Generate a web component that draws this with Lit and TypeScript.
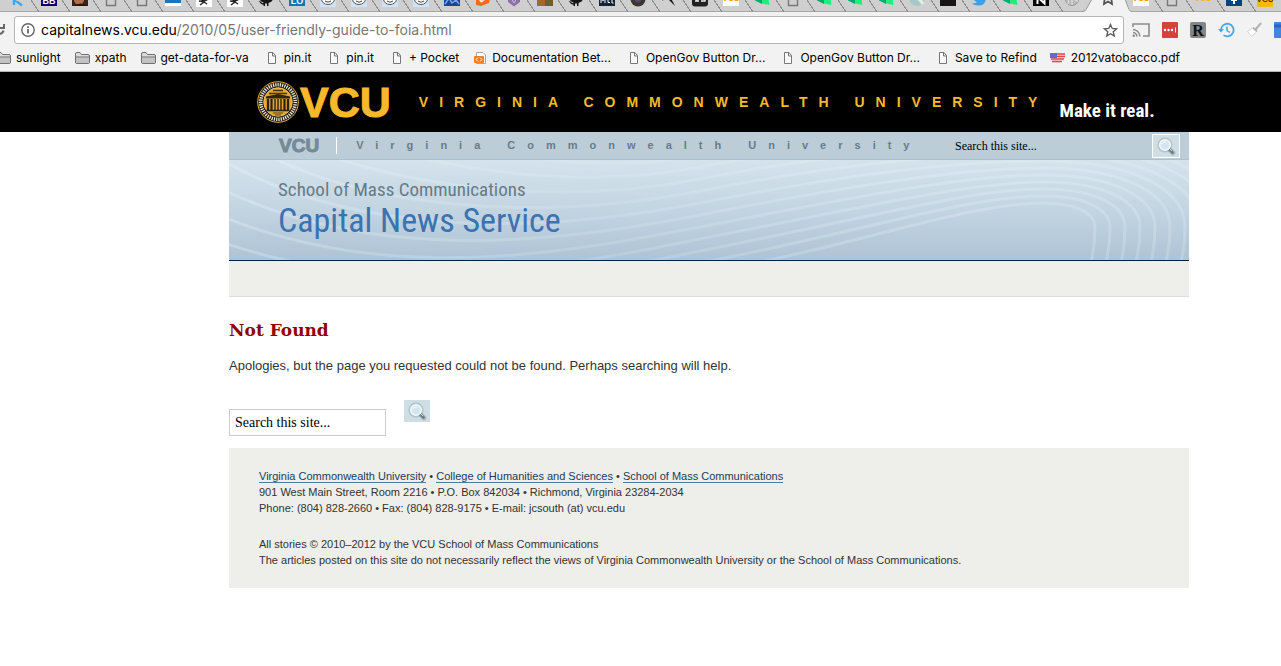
import { LitElement, html, svg, css } from "lit";
import { customElement } from "lit/decorators.js";

type Kind = string;

const page = svg`<path d="M3.5 0V13.500H12.500V0" fill="none" stroke="#777" stroke-width="1.400"/>`;
const reddit = svg`<rect y="0" width="16" height="15" fill="#cfe3f8"/><ellipse cx="8" cy="7" rx="6.500" ry="5.500" fill="#fff" stroke="#555"/><circle cx="5.500" cy="6" r="1.200" fill="#999"/><circle cx="10.500" cy="6" r="1.200" fill="#999"/><path d="M5 9Q8 11.500 11 9" fill="none" stroke="#444"/>`;
const medium = svg`<path d="M1 4L8 7.500V12L1 8.500Z" fill="#00ab6b"/><path d="M8 8L14 4.500L15.500 13L8 11.500Z" fill="#1cf07b"/>`;
const octocat = svg`<path d="M2 3H14Q16 7 13.500 9.500L10.500 11V14H9V11.500H7V14H5.500V12.500Q3 13 2 10.500L0.500 9Q3 9 4 11L5.500 11V10.500Q0 9 2 3Z" fill="#171515"/><path d="M4 3H12V6Q8 8 4 6Z" fill="#cfcfcf"/>`;
const bird = svg`<rect width="16" height="15" fill="#fff"/><path d="M2 6Q5 6 7 9L14 4M7 9Q10 9 12 7M4 13L8 10L11 12M3 9L7 9.500" fill="none" stroke="#222" stroke-width="1.400"/>`;
const block = (bg: string, fg: string, t: string) =>
  svg`<rect width="16" height="14" fill="${bg}"/><text x="8" y="12" text-anchor="middle" font-size="9" font-weight="700" fill="${fg}">${t}</text>`;

const favicons: Record<Kind, unknown> = {
  page, reddit, medium, octocat, bird,
  k: svg`<path d="M4 4V13M11 4L5 8L12 13.500" fill="none" stroke="#43a5ee" stroke-width="2.400"/>`,
  bb: block("#00006e", "#fff", "BB"),
  face: svg`<rect width="16" height="14" fill="#3a211a"/><ellipse cx="7" cy="8" rx="5" ry="4.500" fill="#b56d50"/><path d="M2 14Q8 9 16 14Z" fill="#2a1712"/>`,
  sea: svg`<rect width="16" height="11" fill="#1a75ba"/><rect y="11" width="16" height="3" fill="#fff"/>`,
  lo: block("#0b79b5", "#fff", "LO"),
  nc: svg`<rect width="16" height="14" fill="#14489a"/><path d="M1 12L5 6L8 11L12 8L15 12" fill="none" stroke="#7fa9e0" stroke-width="1.500"/>`,
  strip: svg`<path d="M1 5L15 7 14 11 6 14 1 13Z" fill="#f26b1d"/><path d="M4 8L10 8.500L6 10.500Z" fill="#fff"/>`,
  gem: svg`<path d="M2 4H14V10L8 14.500L2 10Z" fill="#8d70a8"/><path d="M5 6L8 11L11 6" fill="none" stroke="#cdbdd9"/>`,
  camo: svg`<rect width="8" height="14" fill="#a4662b"/><rect x="8" width="8" height="14" fill="#68622a"/>`,
  navy: svg`<rect width="16" height="14" fill="#15233a"/><path d="M2 11V7H4V9V7H6V11M9 7V10.500H11M8 7H10.500M13 7V11H14.500" fill="none" stroke="#fff"/>`,
  lens: svg`<circle cx="8" cy="7" r="7.500" fill="#39382f"/><circle cx="8" cy="7" r="3.500" fill="#57456e"/>`,
  x: svg`<path d="M4 4L14 14L12 10L9 5Z" fill="#161616"/><path d="M1 8Q4 7 5 4" fill="none" stroke="#566ee0" stroke-width="1.600"/>`,
  dark: svg`<rect width="16" height="14.500" rx="3" fill="#222"/><path d="M3 6H7M3 9H7M5 5V9M9 6H13V9H9" fill="none" stroke="#eee" stroke-width="1.500"/>`,
  vcu: svg`<rect width="16" height="14" fill="#fff"/><text x="8" y="9" text-anchor="middle" font-size="8" font-weight="700" fill="#f59a00">VCU</text>`,
  pastel: svg`<circle cx="8" cy="6" r="8" fill="#a8c9c9"/><path d="M3 4Q10 5 14 12" fill="none" stroke="#e4eee2" stroke-width="3"/>`,
  black: svg`<rect width="16" height="14" fill="#161415"/>`,
  tweet: svg`<path d="M1 11Q4 12 6 10Q2 9 2 4L8 7Q8 3 12 4L15 5Q15 14 7 13.500Q3 13.500 1 11Z" fill="#3d9fe6"/>`,
  n: svg`<rect width="16" height="14" fill="#000"/><path d="M4.500 12V5L11.500 11.500V4" fill="none" stroke="#fff" stroke-width="2"/>`,
  globe: svg`<circle cx="8" cy="7" r="6.500" fill="#b9b9b9" stroke="#999"/><path d="M2 5Q6 9 4 12M8 1V13M12 4Q9 9 14 9" fill="none" stroke="#e8e8e8"/>`,
  star: svg`<path d="M5 4L4 12L8 9.500L12 12L11 4" fill="none" stroke="#555" stroke-width="1.800"/><path d="M0 5L4 7" stroke="#d5d57b" stroke-width="1.500"/>`,
  gold: svg`<text x="8" y="9" text-anchor="middle" font-size="8" font-weight="700" fill="#f3b32a">VCU</text>`,
  plus: svg`<rect width="16" height="14" fill="#00427f"/><path d="M8 5V12M5 8H11" stroke="#fff" stroke-width="2"/>`,
  goldbox: svg`<rect width="16" height="15" fill="#fcba00"/><text x="8" y="10" text-anchor="middle" font-size="8" font-weight="700" fill="#443a10">VCU</text>`,
};

const leftTabs = "k bb face page page sea bird bird octocat lo reddit reddit reddit reddit nc strip gem camo octocat navy lens x dark vcu medium page medium medium medium pastel black tweet medium n globe".split(" ");
const rightTabs = "vcu page gold plus goldbox".split(" ");

const folder = html`<svg width="17" height="14" viewBox="0 0 17 14" aria-hidden="true"><path d="M1.500 11V3Q1.500 1.500 3 1.500H6L7.500 3.500H14Q15.500 3.500 15.500 5V11Q15.500 12.500 14 12.500H3Q1.500 12.500 1.500 11Z" fill="#dcdcdc" stroke="#6f6f6f"/><path d="M2 6.500H15V12H2Z" fill="#c3c3c3"/><path d="M2 6H15" stroke="#6f6f6f"/></svg>`;
const sheet = html`<svg width="10" height="14" viewBox="0 0 10 14" aria-hidden="true"><path d="M1.500 1.500H6L8.500 4.500V12.500H1.500ZM5.500 1.500V5H8.500" fill="#fafafa" stroke="#777"/></svg>`;
const codeIcon = html`<svg width="13" height="14" viewBox="0 0 13 14" aria-hidden="true"><path d="M2.500 1.500H9L11.500 4V12.500H2.500Z" fill="#fff" stroke="#a5a5a5"/><rect x="0" y="5" width="10" height="7" rx="1" fill="#f47c20"/><path d="M4 6.500L2 8.500L4 10.500M6 6.500L8 8.500L6 10.500" fill="none" stroke="#fff"/></svg>`;
const flag = html`<svg width="17" height="14" viewBox="0 0 17 14" aria-hidden="true"><path d="M0 2H14L16 3L15 7L13 11H10L8 13L5 11H2L0 8Z" fill="#f4e6e6"/><path d="M7 3H15M7 5.500H15M1 8H14M2 10.500H12" stroke="#e0464c" stroke-width="1.300"/><path d="M0 2H7V7H0Z" fill="#6c66d8"/></svg>`;

const bookmarks: [unknown, string, string][] = [
  [folder, "sunlight", "first"], [folder, "xpath", ""], [folder, "get-data-for-va", ""],
  [sheet, "pin.it", "doc"], [sheet, "pin.it", "doc"], [sheet, "+ Pocket", "doc"],
  [codeIcon, "Documentation Bet...", "code"], [sheet, "OpenGov Button Dr...", "doc"],
  [sheet, "OpenGov Button Dr...", "doc"], [sheet, "Save to Refind", "doc"],
  [flag, "2012vatobacco.pdf", ""],
];

const magnifier = html`<svg width="22" height="20" viewBox="0 0 22 20" aria-hidden="true">
  <circle cx="10" cy="9" r="7.500" fill="#8797a1" opacity=".4"/>
  <path d="M13 12L18 17" stroke="#9fadb6" stroke-width="5" stroke-linecap="round" opacity=".6"/>
  <path d="M13 12L17.500 16.500" stroke="#6e7f89" stroke-width="3" stroke-linecap="round"/>
  <path d="M14 12L17 15" stroke="#c9d5dc" stroke-width="1"/>
  <circle cx="10" cy="9" r="5.300" fill="#d3e5f0" stroke="#f3f8fb" stroke-width="1.600"/>
  <path d="M7 8Q8 5.500 11 6" fill="none" stroke="#fff"/></svg>`;

// Each ribbon sweeps in from the left, dips, rises to a crest and turns down at the right.
const wave = (j: number) => {
  const k = 7 - j;
  const top = 7 * j - 6;
  const mid = 31 + 12 * j;
  const right = 866 + 15 * k;
  return `M${20 - 45 * j} ${-15 + 4 * j}C${130 - 15 * j} ${50 + 30 * j} ${310} ${mid + 31} 471 ${mid}C640 ${mid - 33} 740 ${top} 815 ${top}C${815 + (right - 815) * 0.6} ${top} ${right} ${67 - (67 - top) * 0.6} ${right} 67C${right} 80 ${right - 1} 90 ${right - 4} 102`;
};

const waves = html`<svg class="waves" viewBox="0 0 960 100" preserveAspectRatio="none" aria-hidden="true">
  <defs><linearGradient id="fade" gradientUnits="userSpaceOnUse" x1="0" y1="0" x2="960" y2="0"><stop offset="0" stop-color="#eaf6fa" stop-opacity=".3"/><stop offset=".4" stop-color="#e4f2f4" stop-opacity=".18"/><stop offset=".65" stop-color="#eaf6fa" stop-opacity=".25"/><stop offset="1" stop-color="#eaf6fa" stop-opacity=".22"/></linearGradient></defs>
  ${[-3, -2, -1, 0, 1, 2, 3, 4, 5, 6, 7].map((j) => svg`<path d="${wave(j)}" fill="none" stroke="url(#fade)" stroke-width="3"/>`)}
</svg>`;

const seal = html`<svg width="42" height="42" viewBox="0 0 42 42" role="img" aria-label="University seal">
  <circle cx="21" cy="21" r="20.300" fill="#16130d" stroke="#e9b23c"/>
  <circle cx="21" cy="21" r="17.300" fill="none" stroke="#e8e2d4" stroke-width="3.600" stroke-dasharray="1.300 1"/>
  <circle cx="21" cy="21" r="14.300" fill="#e2a52f" stroke="#f5ce73" stroke-width=".8"/>
  <path d="M16 9.500H26M12 12.500H30" stroke="#453211" stroke-width="1.400"/>
  <path d="M9 15.500L21 13L33 15.500V17.500H9Z" fill="#30230f"/>
  <path d="M11 18V29M14.500 18V29M27.500 18V29M31 18V29" stroke="#2b2110" stroke-width="2.200"/>
  <path d="M18 18V29M21 18V29M24 18V29" stroke="#30230f" stroke-width="1.400"/>
  <path d="M9.500 29.500H32.500" stroke="#2b2110" stroke-width="1.500"/>
  <path d="M16 32H26M18 34H24" stroke="#5b4317" stroke-width="1.200"/>
</svg>`;

@customElement("app-root")
export class AppRoot extends LitElement {
  static styles = css`
    :host { display: block; min-height: 100vh; background: #fff; color: #333; overflow: hidden; font-family: "Liberation Sans", Arial, sans-serif; }
    * { box-sizing: border-box; }
    button { border: 0; padding: 0; background: none; font: inherit; color: inherit; display: block; }
    svg { display: block; flex: none; }
    input { border: 0; margin: 0; outline: 0; background: none; min-width: 0; }
    a { color: inherit; text-decoration: none; }

    .tabs { display: flex; height: 12px; background: #cfcfcf; box-shadow: inset 0 -1px #a5a8a7; overflow: hidden; padding-left: 2px; }
    .group { display: grid; grid-auto-flow: column; grid-auto-columns: 1fr; min-width: 0; }
    .left { flex: 35; }
    .right { flex: 5; }
    .tab { display: flex; width: 100%; height: 12px; align-items: flex-end; justify-content: center; position: relative; }
    .tab svg { overflow: visible; margin-bottom: 4px; }
    .edge { position: absolute; right: -6px; bottom: 0; width: 8px; height: 12px; background: linear-gradient(to top right, transparent 46%, #8c8c8c 47%, #8c8c8c 54%, transparent 55%); }
    .group .tab:last-child .edge, .active .edge { display: none; }
    .active { width: 36px; margin-left: 2px; flex: none; position: relative; }
    .shape { position: absolute; left: -8px; top: 0; }

    .toolbar { display: flex; align-items: center; gap: 8px; height: 33px; padding: 4px 0 1px; background: #f2f2f2; }
    .reload { width: 6px; }
    .address { flex: 1; display: flex; align-items: center; height: 28px; padding: 0 5px 0 6px; gap: 6px; border: 1px solid #b4b4b4; border-radius: 3px; background: #fff; }
    .url { flex: 1; font: 14px/20px Inter, sans-serif; color: #777; white-space: nowrap; }
    .url b { font-weight: 400; color: #000; }
    .tools { display: flex; align-items: center; gap: 12px; width: 149px; overflow: hidden; }

    .bookmarks { display: flex; align-items: center; height: 27px; background: #f2f2f2; border-bottom: 1px solid #aeb3b2; padding-bottom: 1px; gap: 13px; overflow: hidden; font: 12px/16px Inter, sans-serif; color: #000; white-space: nowrap; }
    .bookmark { display: flex; align-items: center; gap: 4px; flex: none; }
    .bookmark.doc { gap: 7px; margin-left: 5px; }
    .bookmark.code { gap: 5px; margin-left: 2px; }
    .bookmark.first { margin-left: -5px; }

    .brand { display: flex; height: 60px; background: #000; color: #f8b82b; padding: 0 92px 0 257px; align-items: center; }
    .brand .name { display: flex; align-items: center; gap: 1px; }
    .vcu { font-size: 43px; line-height: 42px; font-weight: 700; -webkit-text-stroke: 1px #f8b82b; }
    .tracked { margin-left: 28px; font-size: 14px; line-height: 20px; font-weight: 700; letter-spacing: 11px; white-space: nowrap; }
    .motto { margin: 18px 0 0 11px; color: #fff; font: 700 19px/24px "Liberation Sans Narrow", "Roboto Condensed", Roboto, sans-serif; white-space: nowrap; }

    .site { padding: 0 92px 0 229px; }
    .bar { display: flex; align-items: center; height: 28px; padding: 0 9px 0 50px; background: #bccdd8; border-bottom: 1px solid #aac1d3; color: #748a97; }
    .bar .mark { font-size: 19px; line-height: 20px; font-weight: 700; -webkit-text-stroke: 1px #748a97; }
    .bar .sub { flex: 1; margin-left: 17px; padding-left: 19px; border-left: 1px solid #fff; font-size: 11px; line-height: 17px; font-weight: 700; letter-spacing: 12px; color: #667d8b; white-space: nowrap; overflow: hidden; }
    .bar form { display: flex; align-items: center; }
    .bar input { width: 197px; padding: 0; font: 12px/16px "Liberation Serif", serif; color: #000; }
    .bar .go { width: 28px; height: 24px; border: 1px solid #fff; }
    .go { display: grid; place-items: center; background: #cfdde5; }
    .banner { position: relative; height: 101px; padding: 20px 49px; background: linear-gradient(#d4e3ec, #c5d6e3 45%, #aec3d5); border-bottom: 1px solid #02223d; }
    .waves { position: absolute; inset: 0; width: 100%; height: 100%; }
    .banner p, .banner h1 { position: relative; margin: 0; font-family: "Roboto Condensed", Lato, sans-serif; font-weight: 400; white-space: nowrap; }
    .banner p { font-size: 19px; line-height: 20px; color: #667b89; }
    .banner h1 { font-size: 34px; line-height: 40px; color: #3b73b1; }
    .nav { height: 36px; background: #eeeeea; border-bottom: 1px solid #dcdcd8; }

    h2 { margin: 20px 0 0; font: 700 17px/26px "DejaVu Serif", serif; color: #900006; }
    .lead { margin: 13px 0 24px; font-size: 13px; line-height: 20px; }
    .search { display: flex; align-items: flex-start; gap: 18px; margin-bottom: 12px; }
    .search input { width: 157px; height: 27px; margin-top: 9px; border: 1px solid #ccc; padding: 0 5px; font: 14px/20px "Liberation Serif", serif; color: #000; }
    .search .go { width: 26px; height: 22px; }
    footer { padding: 20px 30px; background: #eeeeea; font-size: 11px; line-height: 16px; }
    footer p { margin: 0 0 20px; }
    footer p:last-child { margin: 0; }
    footer a { color: #1a3c5a; border-bottom: 1px solid #4f7e99; }
  `;

  private tab(kind: Kind) {
    return html`<button class="tab" aria-label="Tab"><svg width="16" height="12" viewBox="0 4 16 12" font-family="Liberation Sans" aria-hidden="true">${favicons[kind]}</svg><span class="edge"></span></button>`;
  }

  render() {
    return html`
      <nav class="tabs" aria-label="Tabs">
        <div class="group left">${leftTabs.map((k) => this.tab(k))}</div>
        <div class="active"><svg class="shape" width="50" height="12" viewBox="0 0 50 12" aria-hidden="true"><path d="M0 12Q3 12 4 10L10 -1H43L48 10Q49 12 50 12Z" fill="#f2f2f2"/><path d="M0 11.500Q3 11.500 4 9.500L10 -1M43 -1L47 9.500Q48 11.500 50 11.500" fill="none" stroke="#999"/></svg>${this.tab("star")}</div>
        <div class="group right">${rightTabs.map((k) => this.tab(k))}</div>
      </nav>
      <div class="toolbar">
        <button class="reload" aria-label="Reload"><svg width="6" height="16" viewBox="0 0 6 16"><path d="M0 12Q3 11 3.500 8.500M-1 6H4V2" fill="none" stroke="#666" stroke-width="2"/></svg></button>
        <div class="address">
          <svg width="14" height="14" viewBox="0 0 14 14" aria-hidden="true"><circle cx="7" cy="7" r="6.200" fill="none" stroke="#666" stroke-width="1.400"/><path d="M7 6V10.500M7 3.300V4.900" stroke="#555" stroke-width="1.600"/></svg>
          <span class="url"><b>capitalnews.vcu.edu</b>/2010/05/user-friendly-guide-to-foia.html</span>
          <button aria-label="Bookmark this page"><svg width="15" height="15" viewBox="0 0 15 15"><path d="M7.500 1.500L9.200 5.500L13.600 5.800L10.200 8.700L11.300 13.100L7.500 10.700L3.700 13.100L4.800 8.700L1.400 5.800L5.800 5.500Z" fill="none" stroke="#5a5a5a" stroke-width="1.300"/></svg></button>
        </div>
        <div class="tools">
          <svg width="18" height="16" viewBox="0 0 18 16"><path d="M1 5V2H17V14H11" fill="none" stroke="#8c8c8c" stroke-width="1.600"/><path d="M1 7.500Q7 8 8 14.500M1 10.500Q4.500 11 5 14.500" fill="none" stroke="#8c8c8c" stroke-width="1.500"/><circle cx="1.800" cy="13.800" r="1.300" fill="#8c8c8c"/></svg>
          <svg width="16" height="16" viewBox="0 0 16 16"><rect width="16" height="16" rx="1" fill="#d6413b"/><circle cx="3" cy="8" r="1.200" fill="#fff"/><circle cx="6.500" cy="8" r="1.200" fill="#fff"/><circle cx="10" cy="8" r="1.200" fill="#fff"/><path d="M13.500 5.500V10.500" stroke="#fff"/></svg>
          <svg width="16" height="16" viewBox="0 0 16 16"><rect width="16" height="16" rx="2" fill="#858585"/><text x="8" y="14" text-anchor="middle" font-family="Liberation Serif" font-weight="700" font-size="16" fill="#111">R</text></svg>
          <svg width="17" height="16" viewBox="0 0 17 16"><path d="M3 8A6.300 6.300 0 1 1 5.500 13.100" fill="none" stroke="#42a7ee" stroke-width="1.800"/><path d="M0 7H6L3 10.500Z" fill="#42a7ee"/><path d="M9 4.500V8.500L12 10.500" fill="none" stroke="#42a7ee" stroke-width="1.500"/></svg>
          <svg width="15" height="16" viewBox="0 0 15 16"><path d="M14 1L8.500 7.500" stroke="#b3b3b3" stroke-width="2"/><path d="M5.500 6L9.500 10L4.500 14.500L0.500 9.500Z" fill="#fff" stroke="#d5d5d5"/><path d="M6 5.500L10 9.500" stroke="#aaa" stroke-width="1.500"/></svg>
          <svg width="16" height="16" viewBox="0 0 16 16"><rect width="16" height="16" rx="1" fill="#4583dc"/><path d="M0 4H16" stroke="#2e62bd" stroke-width="3"/></svg>
        </div>
      </div>
      <nav class="bookmarks" aria-label="Bookmarks">
        ${bookmarks.map(([icon, label, kind]) => html`<a class="bookmark ${kind}" href="#">${icon}<span>${label}</span></a>`)}
      </nav>

      <div class="brand">
        <div class="name">${seal}<span class="vcu">VCU</span></div>
        <span class="tracked">VIRGINIA COMMONWEALTH UNIVERSITY</span>
        <span class="motto">Make it real.</span>
      </div>
      <div class="site">
        <header>
          <div class="bar">
            <span class="mark">VCU</span>
            <span class="sub">Virginia Commonwealth University</span>
            <form><input type="text" aria-label="Search this site" value="Search this site..." /><button type="button" class="go" aria-label="Search">${magnifier}</button></form>
          </div>
          <div class="banner">${waves}<p>School of Mass Communications</p><h1>Capital News Service</h1></div>
          <div class="nav"></div>
        </header>
        <main>
          <h2>Not Found</h2>
          <p class="lead">Apologies, but the page you requested could not be found. Perhaps searching will help.</p>
          <form class="search"><input type="text" aria-label="Search this site" value="Search this site..." /><button type="button" class="go" aria-label="Search">${magnifier}</button></form>
        </main>
        <footer>
          <p><a href="#">Virginia Commonwealth University</a> • <a href="#">College of Humanities and Sciences</a> • <a href="#">School of Mass Communications</a><br />901 West Main Street, Room 2216 • P.O. Box 842034 • Richmond, Virginia 23284-2034<br />Phone: (804) 828-2660 • Fax: (804) 828-9175 • E-mail: jcsouth (at) vcu.edu</p>
          <p>All stories © 2010–2012 by the VCU School of Mass Communications<br />The articles posted on this site do not necessarily reflect the views of Virginia Commonwealth University or the School of Mass Communications.</p>
        </footer>
      </div>
    `;
  }
}
